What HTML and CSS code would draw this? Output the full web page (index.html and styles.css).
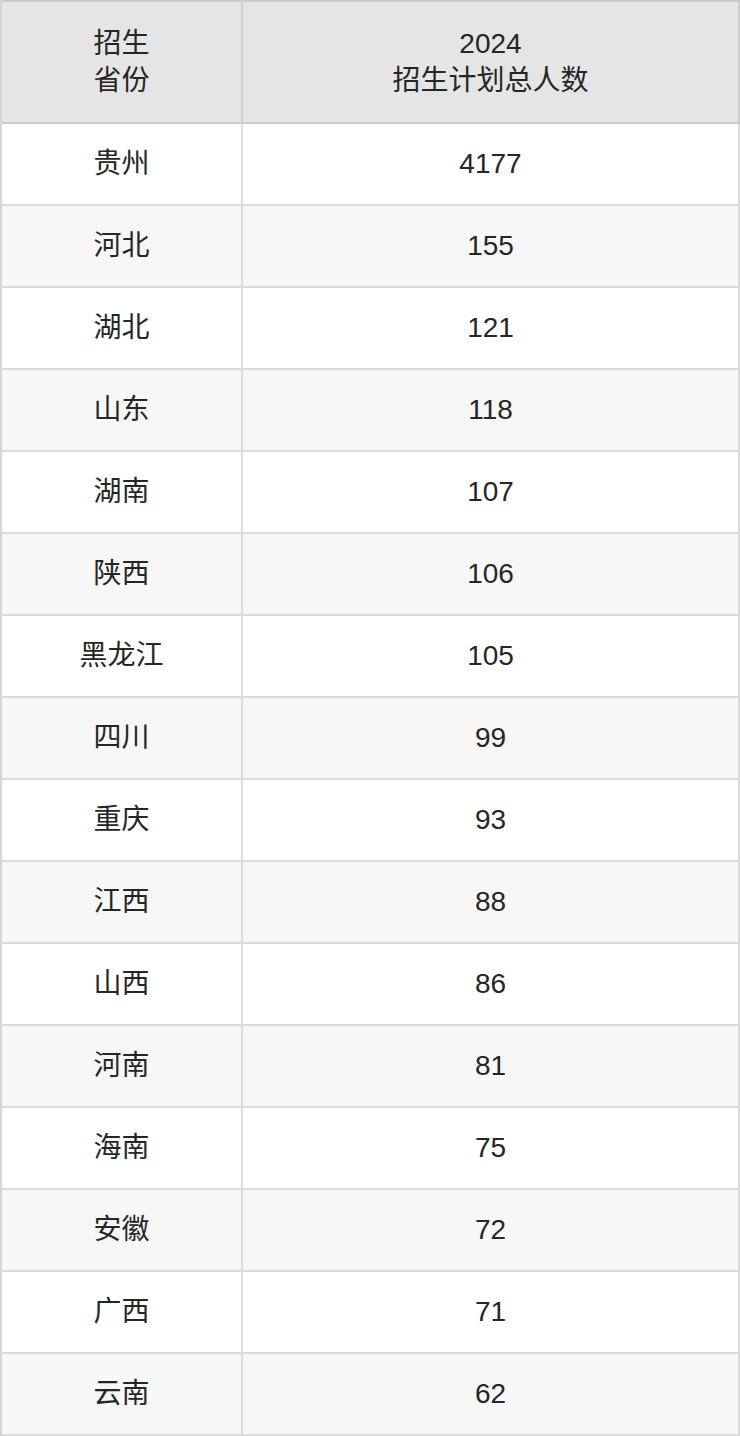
FILE: index.html
```html
<!DOCTYPE html>
<html lang="zh">
<head>
<meta charset="utf-8">
<link rel="stylesheet" href="styles.css">
</head>
<body>
<table class="plan">
  <thead>
    <tr><th class="c1">招生<br>省份</th><th class="c2">2024<br>招生计划总人数</th></tr>
  </thead>
  <tbody>
    <tr><td>贵州</td><td>4177</td></tr>
    <tr><td>河北</td><td>155</td></tr>
    <tr><td>湖北</td><td>121</td></tr>
    <tr><td>山东</td><td>118</td></tr>
    <tr><td>湖南</td><td>107</td></tr>
    <tr><td>陕西</td><td>106</td></tr>
    <tr><td>黑龙江</td><td>105</td></tr>
    <tr><td>四川</td><td>99</td></tr>
    <tr><td>重庆</td><td>93</td></tr>
    <tr><td>江西</td><td>88</td></tr>
    <tr><td>山西</td><td>86</td></tr>
    <tr><td>河南</td><td>81</td></tr>
    <tr><td>海南</td><td>75</td></tr>
    <tr><td>安徽</td><td>72</td></tr>
    <tr><td>广西</td><td>71</td></tr>
    <tr><td>云南</td><td>62</td></tr>
  </tbody>
</table>
</body>
</html>
```

FILE: styles.css
```css
html, body {
  margin: 0;
  padding: 0;
  background: #ffffff;
}
.plan {
  width: 740px;
  border-collapse: separate;
  border-spacing: 0;
  border-left: 2px solid #d6d6d6;
  border-top: 2px solid #cccccc;
  font-family: "Liberation Sans", "Noto Sans CJK SC", sans-serif;
  font-size: 28px;
  color: #262626;
  table-layout: fixed;
}
.plan th, .plan td {
  text-align: center;
  vertical-align: middle;
  padding: 0;
  border-right: 2px solid #dcdcdc;
  border-bottom: 2px solid #dcdcdc;
  font-weight: normal;
}
.plan th {
  background: #e5e5e5;
  height: 120px;
  line-height: 37px;
  border-right-color: #d0d0d0;
  border-bottom-color: #cccccc;
}
.plan .c1 { width: 239px; }
.plan td {
  height: 80px;
  line-height: 36px;
}
.plan tbody tr:nth-child(even) td {
  background: #f7f7f7;
}
```
